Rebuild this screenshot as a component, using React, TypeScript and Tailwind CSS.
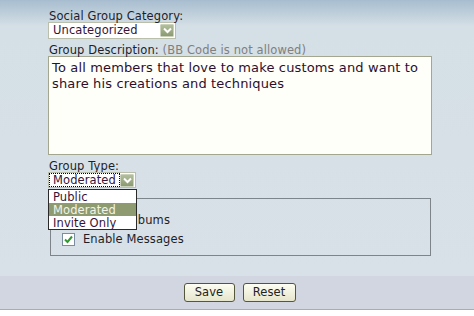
const Arrow = () => (
  <span className="flex h-[13px] w-[14px] items-center justify-center rounded-[1px] border border-[#c9d1bb] bg-[linear-gradient(to_bottom,#b2bf9c,#8b9a72)]">
    <svg width="9" height="7" viewBox="0 0 9 7">
      <path d="M1 1.5 L4.5 5 L8 1.5" fill="none" stroke="#ffffff" strokeWidth="2" />
    </svg>
  </span>
);

const options = ['Public', 'Moderated', 'Invite Only'];

export default function App() {
  return (
    <div className="h-[316px] w-[474px] overflow-hidden bg-white font-['DejaVu_Sans',Verdana,sans-serif] text-[11.5px] tracking-[0.1px] text-[#1e1e2a]">
      <div className="h-[276px] bg-[linear-gradient(to_bottom,#a7bdcf_0px,#d5dfe6_26px,#d8e1e7_100%)] pl-[48px] pt-[10px]">
        <div className="h-[12px] pl-[1px] leading-[12px]">Social Group Category:</div>
        <div className="flex h-[17px] w-[128px] items-center justify-between border border-[#b9bfaa] bg-white pl-[4px] pr-[1px] text-[#36143a]">
          <span>Uncategorized</span>
          <Arrow />
        </div>
        <div className="mt-[5px] h-[12px] pl-[1px] leading-[12px]">
          Group Description: <span className="text-[#808080]">(BB Code is not allowed)</span>
        </div>
        <div className="h-[99px] w-[384px] border border-[#a3a78f] bg-[#fffffa] px-[3px] pt-[3px] text-[13px] leading-[16px] tracking-[0.15px] text-[#2c0f2c]">
          To all members that love to make customs and want to share his creations and techniques
        </div>
        <div className="mt-[5px] h-[12px] pl-[1px] leading-[13px]">Group Type:</div>
        <div className="relative z-10 w-[89px]">
          <div className="flex h-[16px] w-[88px] items-center justify-between border border-[#b9bfaa] bg-white pr-[1px] text-[#36143a]">
            <span className="h-[14px] w-[72px] border border-dotted border-black pl-[3px] leading-[13px]">Moderated</span>
            <Arrow />
          </div>
          <div className="absolute left-0 top-[17px] w-[89px] border border-[#2a2a2a] bg-white">
            {options.map((o) => (
              <div
                key={o}
                className={
                  o === 'Moderated'
                    ? 'h-[13px] bg-[#8e9b71] pl-[4px] leading-[14px] text-[#f4f4e8]'
                    : 'h-[13px] pl-[4px] leading-[14px] text-[#36143a]'
                }
              >
                {o}
              </div>
            ))}
          </div>
        </div>
        <div className="ml-[2px] mt-[10px] h-[58px] w-[381px] border border-[#7d858b] pl-[11px] pt-[12px]">
          <label className="flex h-[19px] items-center gap-[8px]">
            <span className="h-[13px] w-[13px] border border-[#7b8ea0] bg-white" />
            <span>Enable Albums</span>
          </label>
          <label className="flex h-[19px] items-center gap-[8px]">
            <span className="flex h-[13px] w-[13px] items-center justify-center border border-[#7b8ea0] bg-white">
              <svg width="9" height="9" viewBox="0 0 9 9">
                <path d="M1 4.5 L3.5 7 L8 1.5" fill="none" stroke="#2f9a2f" strokeWidth="2" />
              </svg>
            </span>
            <span>Enable Messages</span>
          </label>
        </div>
      </div>
      <div className="flex h-[34px] items-center justify-center gap-[8px] border-b border-[#a9abb5] bg-[#d2d6e1] pl-[5px]">
        <button className="h-[19px] w-[51px] rounded-[3px] border border-[#55573b] bg-[linear-gradient(to_bottom,#fdfdf2,#e6e6cc)] text-[11.5px] leading-[17px] text-[#222]">
          Save
        </button>
        <button className="h-[19px] w-[53px] rounded-[3px] border border-[#55573b] bg-[linear-gradient(to_bottom,#fdfdf2,#e6e6cc)] text-[11.5px] leading-[17px] text-[#222]">
          Reset
        </button>
      </div>
    </div>
  );
}
